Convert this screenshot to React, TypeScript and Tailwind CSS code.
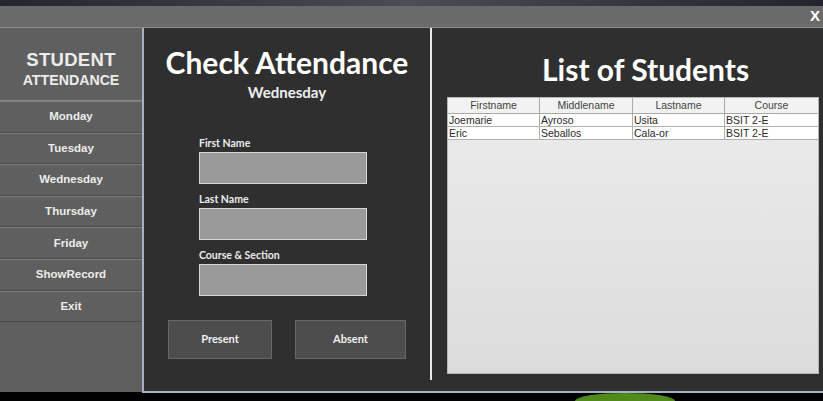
import type { ReactElement } from 'react';

const days = ['Monday', 'Tuesday', 'Wednesday', 'Thursday', 'Friday', 'ShowRecord', 'Exit'];

const students = [
  { first: 'Joemarie', middle: 'Ayroso', last: 'Usita', course: 'BSIT 2-E' },
  { first: 'Eric', middle: 'Seballos', last: 'Cala-or', course: 'BSIT 2-E' },
];

const fields = [
  { label: 'First Name', top: 'mt-[34px]' },
  { label: 'Last Name', top: 'mt-[8px]' },
  { label: 'Course & Section', top: 'mt-[8px]' },
];

function Sidebar(): ReactElement {
  return (
    <div className="flex h-[364px] w-[142px] flex-col bg-[#5f5f5f] font-['Liberation_Sans',sans-serif] font-bold text-[#ececec]">
      <div className="flex h-[73px] flex-col items-center justify-center border-b border-[#858585] pt-[10px]">
        <span className="text-[18.5px] leading-[22px] tracking-[0.3px]">STUDENT</span>
        <span className="text-[14.2px] leading-[18px]">ATTENDANCE</span>
      </div>
      {days.map((d) => (
        <div
          key={d}
          className="flex h-[31.6px] items-center justify-center border-t border-b border-t-[#7c7c7c] border-b-[#4a4a4a] text-[11.5px]"
        >
          {d}
        </div>
      ))}
    </div>
  );
}

function CheckPanel(): ReactElement {
  return (
    <div className="flex w-[286px] flex-col items-center font-['Lato',sans-serif] text-white">
      <h1 className="mt-[16px] text-[30px] font-bold leading-[36px]">Check Attendance</h1>
      <p className="mt-[2px] text-[15px] font-bold leading-[20px] text-[#f0f0f0]">Wednesday</p>
      <div className="mr-[8px] flex w-[168px] flex-col">
        {fields.map((f) => (
          <div key={f.label} className={`${f.top} flex flex-col`}>
            <span className="text-[10.5px] font-bold leading-[14px] text-[#ececec]">{f.label}</span>
            <div className="mt-[2px] h-[32px] w-[168px] border border-[#d6d6d6] bg-[#9a9a9a]" />
          </div>
        ))}
      </div>
      <div className="mt-[24px] flex w-[238px] justify-between">
        <button className="h-[39px] w-[104px] border border-[#686868] bg-[#4d4d4d] text-[11px] font-bold text-[#f0f0f0]">
          Present
        </button>
        <button className="h-[39px] w-[111px] border border-[#686868] bg-[#4d4d4d] text-[11px] font-bold text-[#f0f0f0]">
          Absent
        </button>
      </div>
    </div>
  );
}

function StudentList(): ReactElement {
  const cols = 'grid grid-cols-[92px_93px_92px_1fr]';
  return (
    <div className="flex flex-1 flex-col items-start pl-[15px]">
      <h2 className="ml-[95px] mt-[23px] font-['Lato',sans-serif] text-[30px] font-bold leading-[36px] text-white">
        List of Students
      </h2>
      <div className="mt-[10px] flex h-[277px] w-[372px] flex-col border border-[#b5b5b5] bg-gradient-to-b from-[#ececec] to-[#dcdcdc] font-['Liberation_Sans',sans-serif] text-[10.5px] text-[#2a2a2a]">
        <div className={`${cols} h-[16px] bg-[#f2f2f2] leading-[15px] text-[#444]`}>
          {['Firstname', 'Middlename', 'Lastname', 'Course'].map((h) => (
            <div key={h} className="border-r border-b border-[#a9a9a9] text-center last:border-r-0">
              {h}
            </div>
          ))}
        </div>
        {students.map((s) => (
          <div key={s.first} className={`${cols} h-[13px] bg-white leading-[12px]`}>
            {[s.first, s.middle, s.last, s.course].map((v, i) => (
              <div key={i} className="border-r border-b border-[#b0b0b0] pl-[1px] last:border-r-0">
                {v}
              </div>
            ))}
          </div>
        ))}
      </div>
    </div>
  );
}

export default function App(): ReactElement {
  return (
    <div className="flex h-[401px] w-[823px] flex-col overflow-hidden bg-black">
      <div className="h-[6px] bg-gradient-to-r from-[#23272c] via-[#4a4e54] to-[#22262b]" />
      <div className="flex h-[22px] items-center justify-end border-b border-[#8c8c8c] bg-[#6a6a6a] pr-[3px] font-['Liberation_Sans',sans-serif] text-[15px] font-bold text-white">
        X
      </div>
      <div className="flex">
        <Sidebar />
        <div className="flex h-[365px] flex-1 border-b-2 border-l-2 border-[#a6b2bf] bg-[#2f2f2f]">
          <CheckPanel />
          <div className="h-[352px] w-[2px] bg-[#e8e8e8]" />
          <StudentList />
        </div>
      </div>
      <div className="relative flex-1">
        <div className="absolute left-[575px] top-[0px] h-[16px] w-[100px] rounded-[50%] bg-[#4f8a1a]" />
      </div>
    </div>
  );
}
